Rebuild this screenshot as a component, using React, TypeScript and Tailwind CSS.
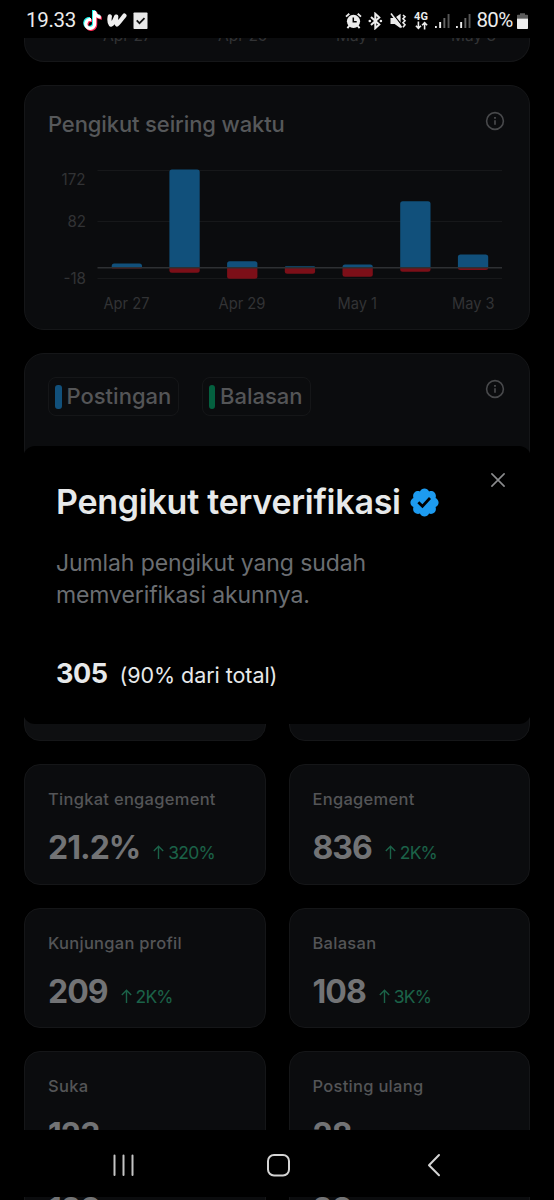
import React from 'react';
import { FaTiktok } from 'react-icons/fa6';

interface Bar {
  gain: number;
  loss: number;
}

interface Stat {
  label: string;
  value: string;
  change: string;
}

// pixel heights above and below the zero line
const bars: Bar[] = [
  { gain: 4, loss: 1 },
  { gain: 98, loss: 5.3 },
  { gain: 6.3, loss: 11.2 },
  { gain: 1.2, loss: 6.2 },
  { gain: 3, loss: 9.3 },
  { gain: 66.3, loss: 4.2 },
  { gain: 13, loss: 2.6 },
];

const dateLabels = [
  { text: 'Apr 27', x: 78.5, width: 46 },
  { text: 'Apr 29', x: 193.5, width: 47 },
  { text: 'May 1', x: 312.5, width: 39.5 },
  { text: 'May 3', x: 427, width: 42.5 },
];

const stats: Stat[] = [
  { label: 'Tingkat engagement', value: '21.2%', change: '320%' },
  { label: 'Engagement', value: '836', change: '2K%' },
  { label: 'Kunjungan profil', value: '209', change: '2K%' },
  { label: 'Balasan', value: '108', change: '3K%' },
  { label: 'Suka', value: '123', change: '2K%' },
  { label: 'Posting ulang', value: '28', change: '1K%' },
];

const InfoIcon = () => (
  <svg width="20" height="20" viewBox="0 0 20 20" fill="none" stroke="#48494b" strokeWidth="1.6">
    <circle cx="10" cy="10" r="8.4" />
    <path d="M10 9.2v4.6" strokeWidth="1.7" />
    <path d="M10 5.9v1.8" strokeWidth="1.9" />
  </svg>
);

const SignalIcon = () => (
  <svg width="15" height="16" viewBox="0 0 15 16">
    <rect x="0" y="13" width="1.8" height="2" fill="#eee" />
    <rect x="4.2" y="9" width="1.9" height="6" fill="#eee" />
    <rect x="8.4" y="5" width="1.9" height="10" fill="#666" />
    <rect x="12.6" y="1" width="1.9" height="14" fill="#555" />
  </svg>
);

const StatusBar = () => (
  <header className="flex h-[38px] shrink-0 items-start justify-between bg-black pl-[26px] pr-[26px] pt-[10px] font-[Roboto] text-[20.5px] leading-[21px] text-[#ececec]">
    <div className="flex items-start">
      <span className="w-[58px] tracking-[-0.3px]">19.33</span>
      <span className="relative mt-px h-[19px] w-[17px]">
        <FaTiktok className="absolute -left-[0.8px] -top-[0.8px] h-[19px] w-[17px] text-[#25f4ee]" />
        <FaTiktok className="absolute left-[0.8px] top-[0.8px] h-[19px] w-[17px] text-[#fe2c55]" />
        <FaTiktok className="absolute left-0 top-0 h-[19px] w-[17px] text-white" />
      </span>
      <svg className="ml-[6px] mt-[3px]" width="20" height="16" viewBox="0 0 20 16" fill="none" stroke="#efefef" strokeLinecap="round" strokeLinejoin="round">
        <path d="M2.8 3.4C2.2 6.5 2.4 9.6 3.8 11.6C5.6 11 7.8 7.2 9.2 3.6C8.8 7.6 9 9.8 10 11.4C12.4 9.4 15 5.6 17.4 2.6" strokeWidth="4.3" />
      </svg>
      <svg className="ml-[6px] mt-[2px]" width="15" height="18" viewBox="0 0 15 18">
        <rect x="0.5" y="0.5" width="14" height="16.5" rx="0.8" fill="#e9e9e9" />
        <path d="M3.7 8.4l2.8 2.8 5-5" fill="none" stroke="#111" strokeWidth="1.7" />
      </svg>
    </div>
    <div className="flex items-start">
      <svg className="mt-[2px]" width="17" height="18" viewBox="0 0 17 18" fill="none" stroke="#ececec">
        <circle cx="8.5" cy="9.3" r="6.6" fill="#ececec" stroke="none" />
        <path d="M1 4.6L4.3 1.8M16 4.6L12.7 1.8" strokeWidth="1.9" />
        <path d="M4.4 13.6l-2 2.6M12.6 13.6l2 2.6" strokeWidth="1.9" />
        <path d="M8.3 5.6v4.2h3.4" stroke="#000" strokeWidth="1.5" />
      </svg>
      <svg className="ml-[6px] mt-[2px]" width="15" height="18" viewBox="0 0 15 18" fill="none" stroke="#ececec" strokeWidth="2">
        <path d="M3 5l8.3 7.5-4 3.7V1.8l4 3.7L3 13" />
        <circle cx="1.8" cy="9" r="1.3" fill="#ececec" stroke="none" />
        <circle cx="12.9" cy="9" r="1.3" fill="#ececec" stroke="none" />
      </svg>
      <svg className="ml-[7px] mt-[2px]" width="17" height="18" viewBox="0 0 17 18">
        <path d="M0.5 6h4.1L10.6 1.7v14.6L4.6 12H0.5z" fill="#ececec" />
        <path d="M2.2 1.2L12.6 14" stroke="#000" strokeWidth="1.2" />
        <path d="M1 1.6L11.6 15.4" stroke="#ececec" strokeWidth="1.6" />
        <path d="M13 3l2 1.8-2 2 2 2-2 2 2 2-2 2.4" fill="none" stroke="#ececec" strokeWidth="1.6" />
      </svg>
      <div className="ml-[7px] mt-[2px] flex w-[15px] flex-col items-center">
        <span className="text-[11px] font-bold leading-[9px]">4G</span>
        <svg width="13" height="9" viewBox="0 0 13 9" fill="none" stroke="#ececec" strokeWidth="1.6">
          <path d="M3.4 0.5v7M0.9 4.8l2.5 2.6 2.5-2.6" />
          <path d="M9.6 8.5v-7M7.1 4.2l2.5-2.6 2.5 2.6" />
        </svg>
      </div>
      <div className="ml-[6px] mt-[3px] flex gap-[6.5px]">
        <SignalIcon />
        <SignalIcon />
      </div>
      <span className="ml-[5.5px] w-[38px] whitespace-nowrap tracking-[-0.7px]">80%</span>
      <svg className="ml-[2.5px] mt-[2px]" width="11" height="18" viewBox="0 0 11 18">
        <path d="M3 1.2h5v1.6h2.2a.8.8 0 0 1 .8.8v3H0v-3a.8.8 0 0 1 .8-.8H3z" fill="#5c5c5c" />
        <path d="M0 6.4h11v9.8a.8.8 0 0 1-.8.8H.8a.8.8 0 0 1-.8-.8z" fill="#ececec" />
      </svg>
    </div>
  </header>
);

const FollowersChart = () => (
  <svg className="absolute left-0 top-0" width="504" height="243" viewBox="0 0.5 504 243" fontFamily="Inter, sans-serif" fontSize="15.5" fill="#323335">
    <g stroke="#17181a" strokeWidth="1">
      <path d="M72.5 85H477M72.5 136H477M72.5 193H477" />
    </g>
    <text x="36.5" y="99.5" textLength="24" lengthAdjust="spacingAndGlyphs">172</text>
    <text x="42.5" y="141.5" textLength="18.5" lengthAdjust="spacingAndGlyphs">82</text>
    <text x="38.5" y="198" textLength="22.5" lengthAdjust="spacingAndGlyphs">-18</text>
    {bars.map((bar, i) => {
      const x = 86.7 + i * 57.7;
      const r = Math.min(2.5, bar.gain);
      const q = Math.min(2.5, bar.loss);
      return (
        <g key={i}>
          <path
            fill="#11507b"
            d={`M${x} 182v${r - bar.gain}q0 ${-r} ${r} ${-r}h${30.3 - 2 * r}q${r} 0 ${r} ${r}v${bar.gain - r}z`}
          />
          <path
            fill="#7c0f18"
            d={`M${x} 182v${bar.loss - q}q0 ${q} ${q} ${q}h${30.3 - 2 * q}q${q} 0 ${q} ${-q}v${q - bar.loss}z`}
          />
        </g>
      );
    })}
    <path d="M72.5 182.2H477" stroke="#2e3033" strokeWidth="1.5" />
    {dateLabels.map((label) => (
      <text key={label.text} x={label.x} y="223.5" textLength={label.width} lengthAdjust="spacingAndGlyphs">
        {label.text}
      </text>
    ))}
  </svg>
);

const LegendChip: React.FC<{ name: string; className: string; dot: string }> = ({ name, className, dot }) => (
  <div className={`flex h-[39px] items-center rounded-lg border border-[#151618] pl-[6px] ${className}`}>
    <span className={`h-[24px] w-[6.5px] shrink-0 rounded-[3px] ${dot}`} />
    <span className="mb-px ml-[5px] text-[22px] font-medium leading-[28px] text-[#545557]">{name}</span>
  </div>
);

const StatCard: React.FC<{ stat: Stat }> = ({ stat }) => (
  <div className="h-[120.5px] overflow-hidden rounded-[16px] border border-[#151618] bg-[#0b0c0e] px-[23px] pt-[24px]">
    <div className="text-[16.5px] font-medium leading-[20px] tracking-[0.28px] text-[#545557]">{stat.label}</div>
    <div className="mt-[19px] flex items-baseline">
      <span className="text-[32px] font-bold leading-[40px] tracking-[-1px] text-[#727375]">{stat.value}</span>
      <svg className="ml-[13px] shrink-0" width="11" height="14" viewBox="0 0 11 14" fill="none" stroke="#1b6248" strokeWidth="1.4">
        <path d="M5.5 14V1.4M0.8 6l4.7-4.7L10.2 6" />
      </svg>
      <span className="ml-[4px] text-[17.5px] leading-[20px] tracking-[-0.8px] text-[#1b6248]">{stat.change}</span>
    </div>
  </div>
);

const VerifiedModal = () => (
  <div className="absolute left-[23px] top-[446px] h-[278px] w-[508px] rounded-[12px] bg-black pl-[33px] pt-[36px]">
    <svg className="absolute right-[26px] top-[27px]" width="14" height="14" viewBox="0 0 14 14" stroke="#8b8c8e" strokeWidth="1.6" strokeLinecap="round">
      <path d="M0.9 0.9l12.2 12.2M13.1 0.9L0.9 13.1" />
    </svg>
    <div className="flex items-center">
      <h2 className="w-[347px] whitespace-nowrap text-[34px] font-semibold leading-[40px] tracking-[-0.25px] text-[#e7e9ea]">
        Pengikut terverifikasi
      </h2>
      <svg className="ml-[5px]" width="33" height="33" viewBox="0 0 24 24" fill="#1d9bf0">
        <path d="M22.25 12c0-1.43-.88-2.67-2.19-3.34.46-1.39.2-2.9-.81-3.91s-2.52-1.27-3.91-.81c-.66-1.31-1.91-2.19-3.34-2.19s-2.67.88-3.33 2.19c-1.4-.46-2.91-.2-3.92.81s-1.26 2.52-.8 3.91c-1.31.67-2.2 1.91-2.2 3.34s.89 2.67 2.2 3.34c-.46 1.39-.21 2.9.8 3.91s2.52 1.26 3.91.81c.67 1.31 1.91 2.19 3.34 2.19s2.68-.88 3.34-2.19c1.39.45 2.9.2 3.91-.81s1.27-2.52.81-3.91c1.31-.67 2.19-1.91 2.19-3.34zm-11.71 4.2L6.8 12.46l1.41-1.42 2.26 2.26 4.8-5.23 1.47 1.36-6.2 6.77z" />
      </svg>
    </div>
    <p className="mt-[25px] text-[23px] leading-[32px] tracking-[-0.1px] text-[#6b6e72]">
      Jumlah pengikut yang sudah
      <br />
      memverifikasi akunnya.
    </p>
    <div className="mt-[47px] flex items-baseline text-[#e7e9ea]">
      <span className="text-[27px] font-bold leading-[32px] tracking-[-0.5px]">305</span>
      <span className="ml-[12px] text-[21.5px] leading-[32px] tracking-[-0.05px]">(90% dari total)</span>
    </div>
  </div>
);

const NavBar = () => (
  <nav className="flex h-[67px] shrink-0 items-center bg-black pl-[113px] pt-[3px]">
    <svg width="21" height="24" viewBox="0 0 21 24" stroke="#c4c4c4" strokeWidth="2" strokeLinecap="round">
      <path d="M1.5 2.5v19.5M10.5 2.5v19.5M19.5 2.5v19.5" />
    </svg>
    <svg className="ml-[132px]" width="25" height="24" viewBox="0 0 25 24" fill="none" stroke="#d4d4d4" strokeWidth="2">
      <rect x="2" y="2" width="21" height="20.5" rx="6" />
    </svg>
    <svg className="ml-[136px]" width="14" height="24" viewBox="0 0 14 24" fill="none" stroke="#d4d4d4" strokeWidth="2" strokeLinecap="round" strokeLinejoin="round">
      <path d="M12 2L2 12.3l10 10" />
    </svg>
  </nav>
);

const App: React.FC = () => {
  return (
    <div className="relative flex h-[1200px] w-[554px] flex-col overflow-hidden bg-black font-['Inter',sans-serif]">
      <StatusBar />

      <main className="flex h-[1092px] shrink-0 flex-col gap-[23px] overflow-hidden px-[24px]">
        {/* Tail of the previous chart */}
        <div className="relative h-[24px] shrink-0 overflow-hidden rounded-b-[20px] border border-t-0 border-[#151618] bg-[#0b0c0e]">
          <div className="-mt-[12px] flex text-[15.5px] leading-[20px] text-[#323335]">
            <span className="ml-[78px] w-[115px]">Apr 27</span>
            <span className="w-[118px]">Apr 25</span>
            <span className="w-[115px]">May 1</span>
            <span>May 3</span>
          </div>
        </div>

        <section className="relative h-[245px] shrink-0 rounded-[20px] border border-[#151618] bg-[#0b0c0e]">
          <FollowersChart />
          <div className="flex items-start justify-between pl-[23px] pr-[24px] pt-[24px]">
            <h3 className="text-[22px] font-medium leading-[28px] tracking-[-0.12px] text-[#56585a]">
              Pengikut seiring waktu
            </h3>
            <div className="mt-px">
              <InfoIcon />
            </div>
          </div>
        </section>

        <section className="h-[244.5px] shrink-0 rounded-[20px] border border-[#151618] bg-[#0b0c0e]">
          <div className="flex items-start pl-[23px] pr-[24px] pt-[23px]">
            <LegendChip name="Postingan" className="w-[131px]" dot="bg-[#11507b]" />
            <LegendChip name="Balasan" className="ml-[22.5px] w-[109px]" dot="bg-[#04603f]" />
            <div className="ml-auto mt-[2px]">
              <InfoIcon />
            </div>
          </div>
        </section>

        <div className="grid shrink-0 grid-cols-2 gap-[23px]">
          <div className="h-[120.5px] rounded-[16px] border border-[#151618] bg-[#0e0f11]" />
          <div className="h-[120.5px] rounded-[16px] border border-[#151618] bg-[#0b0c0e]" />
          {stats.map((stat) => (
            <StatCard key={stat.label} stat={stat} />
          ))}
        </div>
      </main>

      <NavBar />

      {/* Content peeking out under the navigation bar */}
      <div className="grid h-[3px] shrink-0 grid-cols-2 gap-[23px] overflow-hidden px-[24px] text-[32px] font-bold leading-[40px] tracking-[-0.8px] text-[#727375]">
        <div className="h-[40px] border-x border-[#151618] bg-[#0b0c0e] px-[23px]">
          <div className="-mt-[7px]">123</div>
        </div>
        <div className="h-[40px] border-x border-[#151618] bg-[#0b0c0e] px-[23px]">
          <div className="-mt-[7px]">28</div>
        </div>
      </div>

      <VerifiedModal />
    </div>
  );
};

export default App;
